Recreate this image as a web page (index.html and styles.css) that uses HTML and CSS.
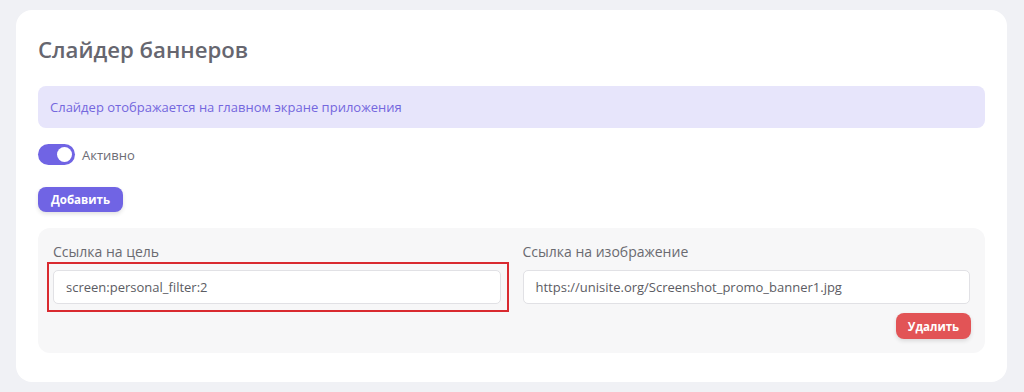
FILE: index.html
```html
<!DOCTYPE html>
<html lang="ru">
<head>
<meta charset="utf-8">
<title>Слайдер баннеров</title>
<link rel="stylesheet" href="styles.css">
</head>
<body>
  <section class="card">
    <h1 class="title">Слайдер баннеров</h1>
    <div class="info">Слайдер отображается на главном экране приложения</div>
    <label class="switch-row">
      <span class="switch"><span class="knob"></span></span>
      <span class="switch-label">Активно</span>
    </label>
    <div class="actions">
      <button class="btn btn-primary" type="button">Добавить</button>
    </div>
    <div class="panel">
      <div class="fields">
        <div class="field">
          <div class="field-label">Ссылка на цель</div>
          <div class="input-wrap highlighted">
            <div class="input">screen:personal_filter:2</div>
            <span class="highlight"></span>
          </div>
        </div>
        <div class="field">
          <div class="field-label">Ссылка на изображение</div>
          <div class="input-wrap">
            <div class="input">https://unisite.org/Screenshot_promo_banner1.jpg</div>
          </div>
        </div>
      </div>
      <div class="panel-actions">
        <button class="btn btn-danger" type="button">Удалить</button>
      </div>
    </div>
  </section>
</body>
</html>
```

FILE: styles.css
```css
html, body {
  margin: 0;
  padding: 0;
}
body {
  background: #f0f1f5;
  padding: 10px 17px 11px 16px;
  font-family: "Open Sans", "Noto Sans", sans-serif;
  color: #5f6068;
}
.card {
  background: #ffffff;
  border-radius: 16px;
  padding: 25px 22px 29px 22px;
  display: flex;
  flex-direction: column;
}
.title {
  margin: 0;
  font-size: 22.2px;
  line-height: 29px;
  font-weight: 600;
  color: #66666f;
}
.info {
  margin-top: 22px;
  height: 42px;
  box-sizing: border-box;
  background: #e7e5fb;
  border-radius: 8px;
  padding: 0 12px;
  display: flex;
  align-items: center;
  font-size: 13px;
  color: #7467de;
}
.switch-row {
  margin-top: 16px;
  display: flex;
  align-items: center;
  gap: 7px;
  height: 21px;
}
.switch {
  width: 37px;
  height: 21px;
  border-radius: 11px;
  background: #7064e4;
  display: flex;
  align-items: center;
  justify-content: flex-end;
  padding-right: 3px;
  box-sizing: border-box;
}
.knob {
  width: 15px;
  height: 15px;
  border-radius: 50%;
  background: #ffffff;
}
.switch-label {
  font-size: 13px;
  color: #6d6d75;
}
.actions {
  margin-top: 22px;
  display: flex;
}
.btn {
  border: none;
  font-family: "Open Sans", "Noto Sans", sans-serif;
  font-weight: 700;
  font-size: 11.5px;
  color: #ffffff;
  border-radius: 8px;
  cursor: pointer;
  box-shadow: 0 2px 4px rgba(0, 0, 0, 0.12);
  padding: 0;
}
.btn-primary {
  width: 85px;
  height: 25px;
  background: #7064e4;
}
.btn-danger {
  width: 75px;
  height: 26px;
  background: #e25456;
}
.panel {
  margin-top: 16px;
  background: #f7f7f8;
  border-radius: 12px;
  padding: 14px 15px 14px 15px;
}
.fields {
  display: grid;
  grid-template-columns: 1fr 1fr;
  column-gap: 22px;
}
.field-label {
  font-size: 14px;
  line-height: 20px;
  color: #6a6a70;
  margin-bottom: 8px;
}
.input-wrap {
  position: relative;
}
.input {
  height: 34px;
  box-sizing: border-box;
  background: #ffffff;
  border: 1px solid #e1e1e5;
  border-radius: 5px;
  padding: 0 12px;
  display: flex;
  align-items: center;
  font-size: 13px;
  color: #5c5c63;
  white-space: nowrap;
  overflow: hidden;
}
.highlight {
  position: absolute;
  left: -6px;
  right: -8px;
  top: -8px;
  bottom: -8px;
  border: 2px solid #d92a30;
  pointer-events: none;
}
.panel-actions {
  margin-top: 9px;
  display: flex;
  justify-content: flex-end;
  margin-right: -1px;
}
```
